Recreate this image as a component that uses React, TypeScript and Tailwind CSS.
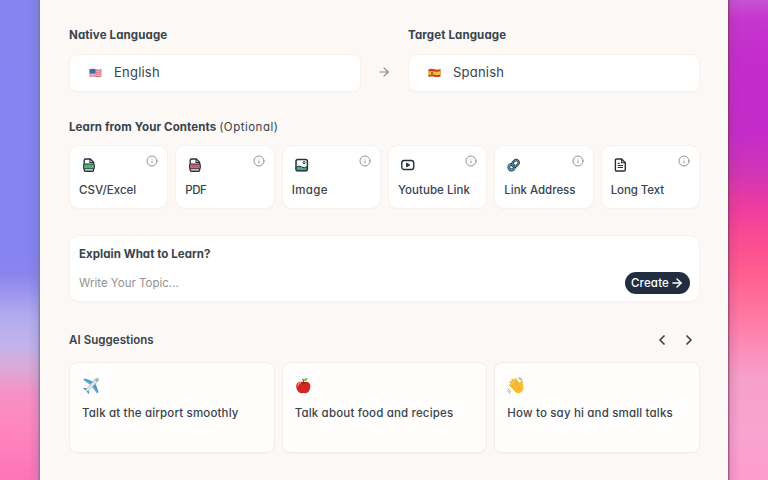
import React from 'react';
import { ArrowRight, ChevronLeft, ChevronRight, Info } from 'lucide-react';

const UsFlag = () => (
  <svg width="13" height="10" viewBox="0 0 13 10">
    <path d="M.5 1.3q3-.9 6 0t6-.3v7.5q-3 1-6 .2t-6 .3z" fill="#ecd5dc" />
    <path d="M.5 2q3-.8 6 0t6-.3M.5 4q3-.8 6 0t6-.3M.5 6q3-.8 6 0t6-.3M.5 8.2q3-.8 6 0t6-.3" stroke="#d2525f" strokeWidth="1" fill="none" />
    <path d="M.5 1.3q3-.9 6 0v4.1q-3-.6-6 0z" fill="#4668a5" />
  </svg>
);

const EsFlag = () => (
  <svg width="13" height="10" viewBox="0 0 13 10">
    <path d="M.5 1.3q3-.9 6 0t6-.3v7.5q-3 1-6 .2t-6 .3z" fill="#c33d28" />
    <path d="M.5 3.4q3-.9 6 0t6-.3v3.5q-3 1-6 .2t-6 .3z" fill="#f8bd27" />
    <path d="M3 3.7h2v2.6H3z" fill="#b5622c" />
  </svg>
);

const FileIcon = ({ band }: { band: string }) => (
  <svg width="14" height="14" viewBox="0 0 14 14" fill="none" stroke="#22303c" strokeWidth="1.35" strokeLinejoin="round">
    <path d="M2.200 12V2.300Q2.200 1 3.500 1h4.800l3.300 3.300V12q0 1.200-1.200 1.200h-7Q2.200 13.200 2.200 12Z" fill="#fff" />
    <path d="M8 1v3.500h3.500" strokeWidth="1.100" />
    <rect x="1.600" y="6" width="10.700" height="4.800" rx=".7" fill={band} strokeWidth="1" />
    <path d="M4 8.400h6" strokeWidth=".7" strokeOpacity=".3" strokeDasharray="1.500 .7" />
  </svg>
);

const ImageIcon = () => (
  <svg width="14" height="14" viewBox="0 0 14 14" fill="none" stroke="#22343c" strokeWidth="1.500">
    <rect x="1" y="1.400" width="11.400" height="11.400" rx="1.800" fill="#fff" />
    <path d="M1.200 9.300Q3.600 7.100 6.400 8.900t5.700-.1v2.500q0 1.300-1.300 1.300H2.500q-1.300 0-1.300-1.300z" fill="#4dab8b" strokeWidth="1" />
    <circle cx="9.100" cy="4.600" r="1.100" strokeWidth="1" />
  </svg>
);

const VideoIcon = () => (
  <svg width="14" height="14" viewBox="0 0 14 14" fill="none" stroke="#25303b" strokeWidth="1.400" strokeLinejoin="round">
    <rect x=".8" y="2.500" width="11.900" height="9" rx="2.200" />
    <path d="M5.500 5.100v3.800L8.900 7z" fill="#25303b" strokeWidth=".9" />
  </svg>
);

const ChainIcon = () => (
  <svg width="14" height="14" viewBox="0 0 14 14" fill="none">
    <circle cx="4.600" cy="9.200" r="2.800" stroke="#1f3340" strokeWidth="2.800" />
    <circle cx="4.600" cy="9.200" r="2.800" stroke="#4fa3cc" strokeWidth="1.300" />
    <g transform="rotate(-45 8.400 5.400)">
      <rect x="4.800" y="2.900" width="7.200" height="5" rx="2.500" stroke="#1f3340" strokeWidth="2.300" />
      <rect x="4.800" y="2.900" width="7.200" height="5" rx="2.500" stroke="#8fc0d6" strokeWidth=".7" />
    </g>
  </svg>
);

const TextIcon = () => (
  <svg width="14" height="14" viewBox="0 0 14 14" fill="none" stroke="#27303a" strokeWidth="1.400" strokeLinejoin="round">
    <path d="M1.400 2.200Q1.400 1 2.600 1h5l3.700 3.700v7.100q0 1.200-1.200 1.200H2.600q-1.200 0-1.200-1.200z" />
    <path d="M7.600 1v3.700h3.700M3.700 5.400h2M3.700 7.500H9M3.700 9.500H9" strokeWidth="1.100" />
  </svg>
);

const Plane = () => (
  <svg width="18" height="18" viewBox="0 0 18 18">
    <path d="M1.200 2.800 3 1.500l9.300 3.400-3.200 3.600zM15.200 16.600l1.300-1.800-3.400-9.200-3.600 3.300z" fill="#3e9bcf" />
    <path d="m1 11.800 1.200-.9 4 .8-1.600 1.700zM6.100 17l1-1.200-.8-3.900-1.700 1.600z" fill="#3488ba" />
    <path d="M3.600 14.500c-.5-.5 1-2.800 2.700-5L12 2.800c1.800-1.800 4-2.300 4.700-1.700.6.700.1 3-1.600 4.700L8.500 11.700c-2.100 1.800-4.400 3.300-4.900 2.800z" fill="#b9c8d0" />
    <path d="m4.500 13.600 9.800-9.900" stroke="#f1f6f8" strokeWidth="1.200" />
    <path d="m14 2.500 1.500 1.500" stroke="#466b80" strokeWidth=".9" />
    <path d="m2.500 3 6 3.800M15 15.300l-4-6" stroke="#87c9e9" strokeWidth=".6" />
  </svg>
);

const Apple = () => (
  <svg width="18" height="18" viewBox="0 0 18 18">
    <path d="M8.500 5.300C5 3.700 1.200 5.200 1.200 9.100c0 3.700 2.600 7.200 5 7.200 1 0 1.500-.4 2.300-.4s1.300.4 2.300.4c2.400 0 4.600-3.500 4.600-7.200 0-3.900-3.400-5.400-6.900-3.800z" fill="#d02925" />
    <path d="M3 8.300q.5-2.200 2.600-2.500" stroke="#f2877d" strokeWidth="1.500" fill="none" strokeLinecap="round" />
    <path d="M6 5.500q2.500 1.600 5 0" stroke="#84201c" fill="none" />
    <path d="M8.500 6q0-3-.8-4.300" stroke="#69432b" strokeWidth="1.100" fill="none" />
    <path d="M8.700 4Q9.300 1 12.500.9 12 3.700 8.700 4z" fill="#65a844" />
  </svg>
);

const Wave = () => (
  <svg width="18" height="18" viewBox="0 0 18 18" fill="none" strokeLinecap="round">
    <path d="m5 10 4 5 5.500-3.500V8.200L9.500 5z" fill="#f5bd32" />
    <path d="M3.300 8.200 8 12.800M3.500 5 9 10.500M5.300 2.700l5.500 6M8.300 2.100l5 6" stroke="#f5bd32" strokeWidth="2.200" />
    <path d="M14.900 4.600q-1.800 1.700-.5 4.500" stroke="#f5bd32" strokeWidth="2.300" />
    <path d="M6.500 12.500q2.200 4.300 5.800 3.600 4.700-1.300 4.100-6.600l-.5-4-3 3.500z" fill="#f5bd32" />
    <path d="m4.800 7.900 2.500 2.300M5.100 4.500l3.600 3.800M7.500 3.300l3.200 3.800M12.200 9.700q-1.300 1.200-.7 2.800" stroke="#d89a29" strokeWidth=".6" />
    <path d="M11.300 1.200q2 .3 2.800 2M12.900.6q1.500.5 2 1.900M1.200 11.800q.6 2 2.400 2.800M.8 14q.7 1.600 2.200 2.200" stroke="#8b9095" strokeWidth=".8" />
  </svg>
);

const sources = [
  { icon: <FileIcon band="#58b96b" />, title: 'CSV/Excel', tracking: 'tracking-[0.02px]' },
  { icon: <FileIcon band="#d96068" />, title: 'PDF', tracking: 'tracking-[-0.5px]' },
  { icon: <ImageIcon />, title: 'Image', tracking: 'tracking-[0.4px]' },
  { icon: <VideoIcon />, title: 'Youtube Link', tracking: 'tracking-[0.04px]' },
  { icon: <ChainIcon />, title: 'Link Address', tracking: 'tracking-[-0.03px]' },
  { icon: <TextIcon />, title: 'Long Text', tracking: 'tracking-[-0.08px]' },
];

const suggestions = [
  { icon: <Plane />, title: 'Talk at the airport smoothly' },
  { icon: <Apple />, title: 'Talk about food and recipes' },
  { icon: <Wave />, title: 'How to say hi and small talks' },
];

const LanguageField = ({ label, flag, value }: { label: string; flag: React.ReactNode; value: string }) => (
  <div className="w-[292px]">
    <div className="h-4 text-[11.5px] leading-4 font-bold tracking-[0.13px]">{label}</div>
    <div className="mt-[11px] flex h-[38px] items-center rounded-lg border border-[#f5f2ef] bg-white pl-[19px] shadow-[0_1px_1px_rgba(0,0,0,0.02)]">
      {flag}
      <span className="ml-3 pb-[2px] text-[13px] leading-5 tracking-[0.22px]">{value}</span>
    </div>
  </div>
);

export default function App() {
  return (
    <div className="flex h-[480px] w-[768px] overflow-hidden bg-[#fbf8f5] font-[Inter,sans-serif] text-[#39434e] [font-feature-settings:'cv11']">
      <div className="w-10 shrink-0 bg-[linear-gradient(to_right,transparent_70%,#5b5f8c26_94%,#77789ccc_98%),linear-gradient(to_bottom,#8684f0_0,#8583f3_52%,#8984ee_57%,#b4acef_66%,#c3b3eb_72%,#dca8d5_77%,#f890c5_82%,#ff85bd_90%,#ff72b8_100%)]" />

      <main className="w-[688px] px-[29px] pt-[27px] pr-7">
        <div className="flex justify-between">
          <LanguageField label="Native Language" flag={<UsFlag />} value="English" />
          <ArrowRight className="mt-[38px] mr-px h-[14px] w-[14px] text-[#858585]" strokeWidth={1.9} />
          <LanguageField label="Target Language" flag={<EsFlag />} value="Spanish" />
        </div>

        <h2 className="mt-[27px] h-4 text-[11.5px] leading-4 font-bold tracking-[0.11px]">
          Learn from Your Contents <span className="font-normal tracking-[0.5px]">(Optional)</span>
        </h2>
        <div className="mt-[10px] grid grid-cols-6 gap-[7px]">
          {sources.map((source) => (
            <div key={source.title} className="h-16 rounded-[10px] border border-[#f5f2ef] bg-white shadow-[0_1px_1px_rgba(0,0,0,0.02)]">
              <div className="flex items-start justify-between pt-[9px] pr-[9px] pl-3">
                <div className="pt-[3px]">{source.icon}</div>
                <Info className="h-3 w-3 text-[#85898d]" strokeWidth={1.8} />
              </div>
              <div className={`mt-[10px] pl-[9px] text-[11.5px] leading-4 font-medium whitespace-nowrap ${source.tracking}`}>
                {source.title}
              </div>
            </div>
          ))}
        </div>

        <div className="mt-[26px] flex h-[67px] flex-col rounded-[10px] border border-[#f5f2ef] bg-white pt-[10px] pr-[9px] pl-[9px] shadow-[0_1px_1px_rgba(0,0,0,0.02)]">
          <h2 className="h-4 text-[11.5px] leading-4 font-bold tracking-[0.05px]">Explain What to Learn?</h2>
          <div className="mt-[10px] flex items-center justify-between">
            <span className="pt-[2px] text-[11.5px] text-[#929292]">Write Your Topic...</span>
            <button className="flex h-[22px] w-[65px] items-center justify-center gap-px rounded-full bg-[#222e40] text-[11.5px] font-medium tracking-[0.15px] text-white">
              <span className="pt-px">Create</span>
              <ArrowRight className="h-[14px] w-[14px]" strokeWidth={2.5} />
            </button>
          </div>
        </div>

        <div className="mt-[30px] flex h-4 items-center justify-between">
          <h2 className="text-[11.5px] leading-4 font-semibold tracking-[0.06px]">AI Suggestions</h2>
          <div className="flex gap-[11px] pr-[3px]">
            <ChevronLeft className="h-4 w-4" strokeWidth={2.6} />
            <ChevronRight className="h-4 w-4" strokeWidth={2.6} />
          </div>
        </div>
        <div className="mt-[14px] grid grid-cols-3 gap-[7px]">
          {suggestions.map((item) => (
            <div key={item.title} className="h-[91px] rounded-lg border border-[#f2eeeb] bg-[#fffefc] pt-[14px] pl-3 shadow-[0_1px_1px_rgba(0,0,0,0.02)]">
              {item.icon}
              <div className="mt-[10px] text-[11.5px] leading-4 font-medium tracking-[0.17px] whitespace-nowrap">{item.title}</div>
            </div>
          ))}
        </div>
      </main>

      <div className="w-10 shrink-0 bg-[linear-gradient(to_left,transparent_70%,#75415b26_95%,#79345eaa_98%),linear-gradient(to_bottom,#c653d2_0,#c536cf_4%,#c42ccb_12%,#c52bc9_28%,#d135b5_36%,#ee3ba0_43%,#f94a93_49%,#ff5b8e_56%,#ff7ba7_67%,#f69fc9_78%,#f8a4cf_90%,#ff9bce_100%)]" />
    </div>
  );
}
